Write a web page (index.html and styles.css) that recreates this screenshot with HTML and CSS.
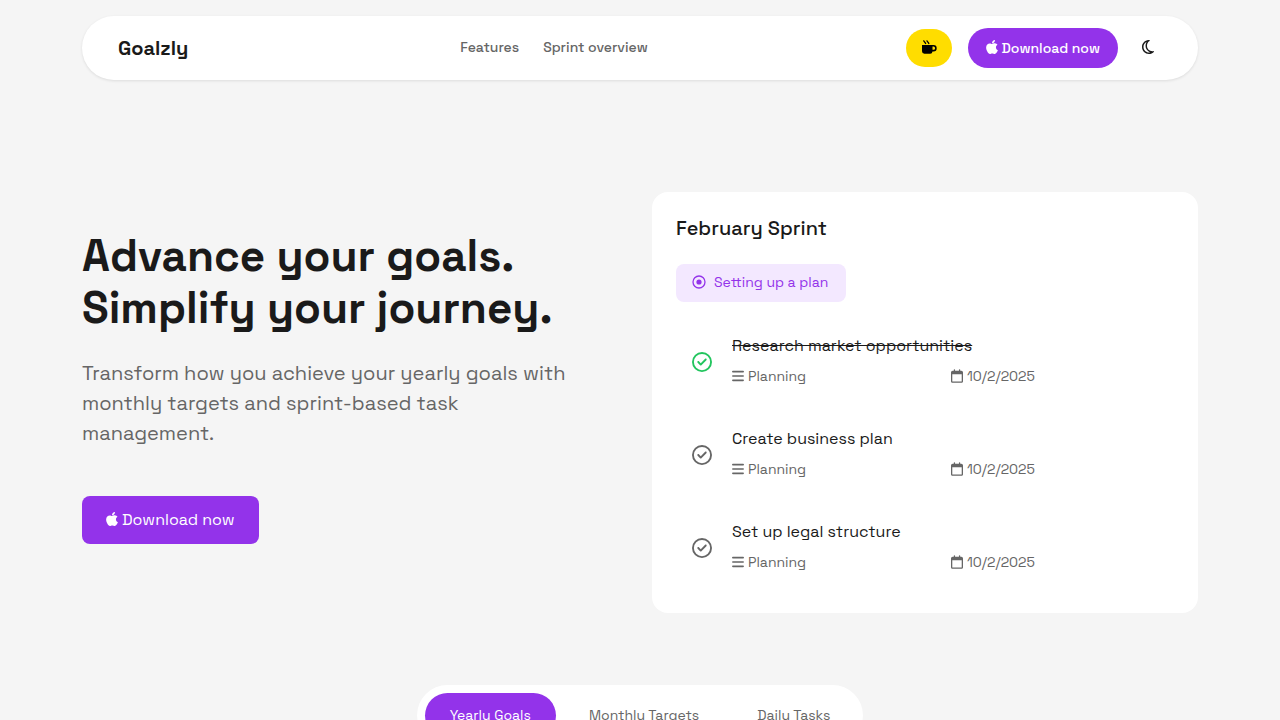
FILE: index.html
```html
<!DOCTYPE html>
<html lang="en">
<head>
    <meta charset="UTF-8">
    <meta name="viewport" content="width=device-width, initial-scale=1.0">
    <title>Goalzly</title>
    <link rel="stylesheet" href="styles.css">
</head>
<body>
    <!-- Shared icons -->
    <svg class="sprite" aria-hidden="true">
        <symbol id="apple" viewBox="0 0 384 512">
            <path d="M318.7 268.7c-.2-36.7 16.4-64.4 50-84.8-18.8-26.9-47.2-41.7-84.7-44.6-35.5-2.8-74.3 20.7-88.5 20.7-15 0-49.4-19.7-76.4-19.7C63.3 141.2 4 184.8 4 273.5q0 39.3 14.4 81.2c12.8 36.7 59 126.7 107.2 125.2 25.2-.6 43-17.9 75.8-17.9 31.8 0 48.3 17.9 76.4 17.9 48.6-.7 90.4-82.5 102.6-119.3-65.2-30.7-61.7-90-61.7-91.9zm-56.6-164.2c27.3-32.4 24.8-61.9 24-72.5-24.1 1.4-52 16.4-67.9 34.9-17.5 19.8-27.8 44.3-25.6 71.9 26.1 2 49.9-11.4 69.5-34.3z"/>
        </symbol>
        <symbol id="check" viewBox="0 0 512 512">
            <path d="M256 48a208 208 0 1 1 0 416 208 208 0 1 1 0-416zm0 464A256 256 0 1 0 256 0a256 256 0 1 0 0 512zM369 209c9.4-9.4 9.4-24.6 0-33.9s-24.6-9.4-33.9 0l-111 111-47-47c-9.4-9.4-24.6-9.4-33.9 0s-9.4 24.6 0 33.9l64 64c9.4 9.4 24.6 9.4 33.9 0L369 209z"/>
        </symbol>
        <symbol id="bars" viewBox="0 0 448 512">
            <path d="M0 96c0-18 14-32 32-32h384c18 0 32 14 32 32s-14 32-32 32H32c-18 0-32-14-32-32zm0 160c0-18 14-32 32-32h384c18 0 32 14 32 32s-14 32-32 32H32c-18 0-32-14-32-32zm448 160c0 18-14 32-32 32H32c-18 0-32-14-32-32s14-32 32-32h384c18 0 32 14 32 32z"/>
        </symbol>
        <symbol id="calendar" viewBox="0 0 448 512">
            <path d="M152 24c0-13.3-10.7-24-24-24s-24 10.7-24 24v40H64C28.700 64 0 92.700 0 128v320c0 35.300 28.700 64 64 64h320c35.300 0 64-28.700 64-64V128c0-35.300-28.700-64-64-64h-40V24c0-13.300-10.700-24-24-24s-24 10.700-24 24v40H152V24zM48 192h352v256c0 8.800-7.200 16-16 16H64c-8.800 0-16-7.200-16-16V192z"/>
        </symbol>
    </svg>

    <header class="container">
        <nav class="navbar">
            <a class="brand" href="#">Goalzly</a>
            <div class="nav-links">
                <a href="#features">Features</a>
                <a href="#sprint">Sprint overview</a>
            </div>
            <div class="nav-actions">
                <a class="coffee" href="#" aria-label="Buy me a coffee">
                    <svg width="16" height="16" viewBox="0 0 16 16">
                        <path d="M1 5h11.500a3 3 0 0 1 0 6.400H11.500a2.500 2.500 0 0 1-2.300 2.300H3.400A2.400 2.400 0 0 1 1 11.300zM11.500 6.600v3.200h1a1.600 1.600 0 0 0 0-3.200z"/>
                        <path class="steam" d="M2.600.4q.2 1 1 1.700T4.800 4M5.800.4q.2 1 1 1.700T8 4"/>
                    </svg>
                </a>
                <a class="btn btn-pill" href="#"><svg class="icon-apple"><use href="#apple"/></svg>Download now</a>
                <button class="theme-toggle" type="button" aria-label="Dark mode">
                    <svg width="12" height="16" viewBox="0 0 384 512">
                        <path d="M145 99C124 133 112 173 112 216c0 98 63 181 150 212-12 3-25 4-38 4C127 432 48 353 48 256c0-69 39-128 97-157zM207 33C91 41 0 138 0 256c0 124 100 224 223 224 48 0 92-15 129-41 10-7 19-15 27-23 5-5 6-12 3-19s-10-10-17-9c-10 2-20 3-30 3-100 0-175-75-175-175 0-66 28-118 81-149 6-4 9-10 8-17s-8-17-42-17z"/>
                    </svg>
                </button>
            </div>
        </nav>
    </header>

    <main class="container">
        <section class="hero">
            <div class="hero-text">
                <h1>Advance your goals.<br>Simplify your journey.</h1>
                <p>Transform how you achieve your yearly goals with monthly targets and sprint-based task management.</p>
                <a class="btn btn-large" href="#"><svg class="icon-apple"><use href="#apple"/></svg>Download now</a>
            </div>

            <div class="sprint-card" id="sprint">
                <h2>February Sprint</h2>
                <div class="badge">
                    <svg width="14" height="14" viewBox="0 0 14 14">
                        <circle class="ring" cx="7" cy="7" r="6"/>
                        <circle cx="7" cy="7" r="2.6"/>
                    </svg>
                    <span>Setting up a plan</span>
                </div>
                <ul class="tasks">
                    <li class="task done">
                        <svg class="icon-check"><use href="#check"/></svg>
                        <div class="task-body">
                            <div class="task-title">Research market opportunities</div>
                            <div class="task-meta">
                                <span><svg class="icon-meta"><use href="#bars"/></svg>Planning</span>
                                <span><svg class="icon-meta"><use href="#calendar"/></svg>10/2/2025</span>
                            </div>
                        </div>
                    </li>
                    <li class="task">
                        <svg class="icon-check"><use href="#check"/></svg>
                        <div class="task-body">
                            <div class="task-title">Create business plan</div>
                            <div class="task-meta">
                                <span><svg class="icon-meta"><use href="#bars"/></svg>Planning</span>
                                <span><svg class="icon-meta"><use href="#calendar"/></svg>10/2/2025</span>
                            </div>
                        </div>
                    </li>
                    <li class="task">
                        <svg class="icon-check"><use href="#check"/></svg>
                        <div class="task-body">
                            <div class="task-title">Set up legal structure</div>
                            <div class="task-meta">
                                <span><svg class="icon-meta"><use href="#bars"/></svg>Planning</span>
                                <span><svg class="icon-meta"><use href="#calendar"/></svg>10/2/2025</span>
                            </div>
                        </div>
                    </li>
                </ul>
            </div>
        </section>

        <section class="features" id="features">
            <div class="tabs">
                <button class="tab active" type="button">Yearly Goals</button>
                <button class="tab" type="button">Monthly Targets</button>
                <button class="tab" type="button">Daily Tasks</button>
            </div>
        </section>
    </main>
</body>
</html>
```
FILE: styles.css
```css
* {
    box-sizing: border-box;
}

body {
    margin: 0;
    font-family: "Space Grotesk", Inter, "Liberation Sans", sans-serif;
    font-size: 16px;
    line-height: 24px;
    color: #1a1a1a;
    background-color: #f5f5f5;
}

a {
    color: inherit;
    text-decoration: none;
}

svg {
    fill: currentColor;
    flex-shrink: 0;
}

.sprite {
    display: none;
}

.container {
    max-width: 1140px;
    margin: 0 auto;
    padding: 0 12px;
}

/* Navbar */
.navbar {
    display: flex;
    align-items: center;
    justify-content: space-between;
    height: 64px;
    margin-top: 16px;
    padding: 0 36px;
    background-color: #fff;
    border-radius: 32px;
    box-shadow: 0 1px 3px rgba(0, 0, 0, 0.1);
}

.brand {
    font-size: 20px;
    font-weight: 700;
}

.nav-links {
    display: flex;
    gap: 24px;
    padding: 0 0 2px 14px;
    font-size: 14px;
    font-weight: 500;
    color: #666;
}

.nav-actions {
    display: flex;
    align-items: center;
    gap: 16px;
}

.coffee {
    display: flex;
    align-items: center;
    justify-content: center;
    width: 46px;
    height: 38px;
    color: #000;
    background-color: #ffdd00;
    border-radius: 20px;
}

.coffee path {
    fill-rule: evenodd;
}

.coffee .steam {
    fill: none;
    stroke: currentColor;
    stroke-width: 1.3;
}

.btn {
    display: inline-flex;
    align-items: center;
    gap: 4px;
    color: #fff;
    background-color: #9333ea;
}

.btn-pill {
    height: 40px;
    padding: 0 18px;
    border-radius: 20px;
    font-size: 14px;
    font-weight: 500;
}

.btn-large {
    height: 48px;
    padding: 0 24px;
    border-radius: 8px;
}

.icon-apple {
    width: 12px;
    height: 16px;
    margin-bottom: 2px;
}

.theme-toggle {
    display: flex;
    padding: 8px 8px 10px;
    border: none;
    background: none;
    color: #1a1a1a;
    cursor: pointer;
}

/* Hero */
.hero {
    display: grid;
    grid-template-columns: 1fr 1fr;
    gap: 24px;
    align-items: center;
    padding: 112px 0 72px;
}

.hero-text {
    padding-bottom: 32px;
}

h1 {
    margin: 0 0 24px;
    font-size: 44px;
    font-weight: 700;
    line-height: 52px;
}

.hero-text p {
    max-width: 500px;
    margin: 0 0 48px;
    font-size: 20px;
    line-height: 30px;
    color: #666;
}

/* Sprint card */
.sprint-card {
    padding: 24px;
    background-color: #fff;
    border-radius: 16px;
}

h2 {
    margin: 0 0 24px;
    font-size: 20px;
    font-weight: 500;
    line-height: 24px;
}

.badge {
    display: inline-flex;
    align-items: center;
    gap: 8px;
    height: 38px;
    padding: 0 18px 2px 16px;
    border-radius: 8px;
    font-size: 14px;
    color: #9333ea;
    background-color: #f3e8ff;
}

.badge .ring {
    fill: none;
    stroke: currentColor;
    stroke-width: 1.3;
}

.tasks {
    display: grid;
    gap: 8px;
    margin: 16px 0 0;
    padding: 0;
    list-style: none;
}

.task {
    display: flex;
    align-items: center;
    gap: 20px;
    padding: 16px;
}

.icon-check {
    width: 20px;
    height: 20px;
    margin-top: 2px;
    color: #666;
}

.done .icon-check {
    color: #22c55e;
}

.done .task-title {
    text-decoration: line-through;
}

.task-body {
    flex: 1;
}

.task-meta {
    display: grid;
    grid-template-columns: 1fr 1fr;
    gap: 12px;
    margin-top: 8px;
    font-size: 14px;
    line-height: 21px;
    color: #666;
}

.task-meta span {
    display: flex;
    align-items: center;
    gap: 4px;
}

.icon-meta {
    width: 12px;
    height: 14px;
    margin-bottom: 2px;
}

/* Feature tabs */
.features {
    display: flex;
    justify-content: center;
    padding-bottom: 72px;
}

.tabs {
    display: flex;
    gap: 8px;
    padding: 8px;
    background-color: #fff;
    border-radius: 32px;
}

.tab {
    padding: 12px 25px;
    border: none;
    border-radius: 24px;
    background: none;
    font-family: inherit;
    font-size: 14px;
    line-height: 21px;
    color: #666;
    cursor: pointer;
}

.tab.active {
    color: #fff;
    background-color: #9333ea;
}
```
